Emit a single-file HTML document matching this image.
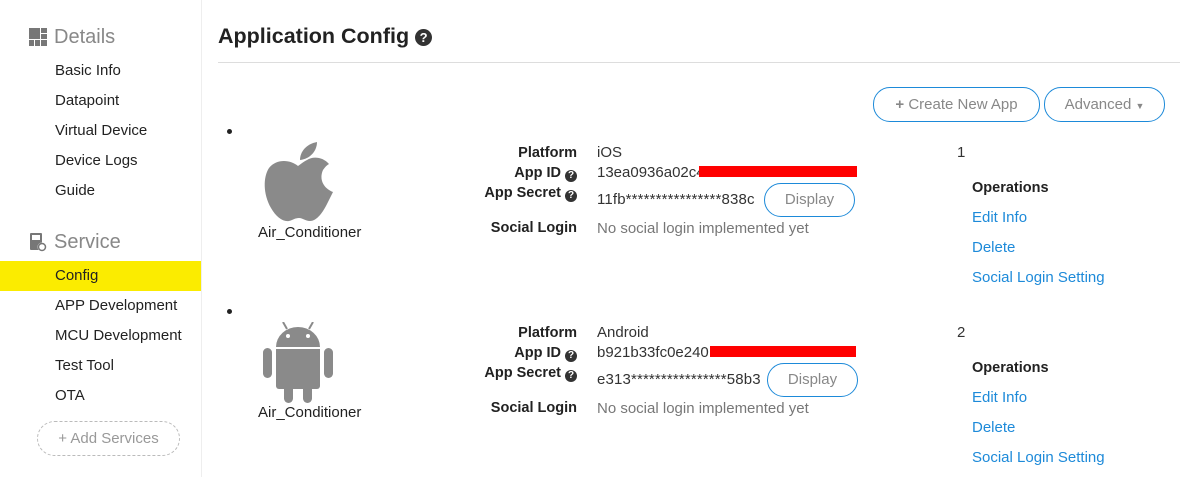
<!DOCTYPE html>
<html><head><meta charset="utf-8"><style>
*{margin:0;padding:0;box-sizing:border-box}
body{width:1184px;height:477px;background:#fff;font-family:"Liberation Sans",sans-serif;color:#333;position:relative;overflow:hidden;font-size:15px}
.a{position:absolute;white-space:nowrap;line-height:20px}
.t{margin-top:1px}
.side{position:absolute;left:0;top:0;width:202px;height:477px;border-right:1px solid #eee}
.si{left:55px;font-size:15px;color:#222}
.hd{font-size:20px;color:#888;left:54px}
.lab{font-weight:bold;text-align:right;width:120px;left:457px;color:#222;font-size:14.5px}
.val{left:597px;color:#333}
.gray{color:#777}
.lnk{left:972px;color:#1d8ad9}
.btn{position:absolute;border:1px solid #1d8ad9;border-radius:17px;color:#888;text-align:center;font-size:15px}
.q{display:inline-block;width:12px;height:12px;border-radius:50%;background:#333;color:#fff;font-size:10px;line-height:12px;text-align:center;vertical-align:-1px;font-weight:bold}
.st{letter-spacing:0.15px}
</style></head><body>
<div class="side"></div>
<div style="position:absolute;left:0;top:261px;width:201px;height:30px;background:#fbec00"></div>
<svg class="a" style="left:29px;top:28px" width="18" height="18" viewBox="0 0 18 18" fill="#777"><rect x="0" y="0" width="11" height="11"/><rect x="12" y="0" width="6" height="5"/><rect x="12" y="6" width="6" height="5"/><rect x="0" y="12" width="5" height="6"/><rect x="6" y="12" width="5" height="6"/><rect x="12" y="12" width="6" height="6"/></svg>
<div class="a hd" style="top:25px;line-height:24px">Details</div>
<div class="a si t" style="top:60px">Basic Info</div>
<div class="a si t" style="top:90px">Datapoint</div>
<div class="a si t" style="top:120px">Virtual Device</div>
<div class="a si t" style="top:150px">Device Logs</div>
<div class="a si t" style="top:180px">Guide</div>
<svg class="a" style="left:29px;top:233px" width="18" height="19" viewBox="0 0 18 19" fill="#777"><rect x="1" y="0" width="12" height="17" rx="1"/><rect x="3" y="2" width="8" height="5" fill="#fff"/><circle cx="13" cy="14" r="4.5" fill="#fff"/><circle cx="13" cy="14" r="3.5" fill="none" stroke="#777" stroke-width="1.5"/></svg>
<div class="a hd" style="top:230px;line-height:24px">Service</div>
<div class="a si t" style="top:265px">Config</div>
<div class="a si t" style="top:295px">APP Development</div>
<div class="a si t" style="top:325px">MCU Development</div>
<div class="a si t" style="top:355px">Test Tool</div>
<div class="a si t" style="top:385px">OTA</div>
<div style="position:absolute;left:37px;top:421px;width:143px;height:35px;border:1px dashed #bbb;border-radius:18px;color:#999;font-size:15px;text-align:center;line-height:33px">+ Add Services</div>

<div class="a" style="left:218px;top:23px;font-size:21.5px;font-weight:bold;color:#222;line-height:26px">Application Config <span class="q" style="width:17px;height:17px;font-size:13px;line-height:17px;vertical-align:1px">?</span></div>
<div style="position:absolute;left:218px;top:62px;width:962px;height:1px;background:#ddd"></div>

<div class="btn" style="left:873px;top:87px;width:167px;height:35px;line-height:33px"><b style="color:#888">+</b> Create New App</div>
<div class="btn" style="left:1044px;top:87px;width:121px;height:35px;line-height:33px">Advanced <span style="font-size:9px">▼</span></div>

<div style="position:absolute;left:227px;top:129px;width:5px;height:5px;border-radius:50%;background:#222"></div>
<svg class="a" style="left:263px;top:142px" width="70" height="80" viewBox="0 0 70 80" fill="#8a8a8a"><path d="M35 24 C28 18 14 16 6 26 C0 35 0 52 8 66 C13 75 20 80 26 79 C30 78 32 76 36 76 C40 76 42 79 47 79 C54 79 60 70 64 62 C66 58 68 54 70 50 C60 46 56 37 60 28 C62 25 64 23 66 22 C60 15 50 14 44 18 C40 20 38 22 35 24 Z"/><path d="M37 18 C37 10 43 2 54 0 C54 9 47 17 37 18 Z"/></svg>
<div class="a t" style="left:258px;top:222px;color:#222">Air_Conditioner</div>

<div class="a lab t" style="top:142px">Platform</div>
<div class="a lab t" style="top:162px">App ID <span class="q">?</span></div>
<div class="a lab t" style="top:182px">App Secret <span class="q">?</span></div>
<div class="a lab t" style="top:217px">Social Login</div>
<div class="a val t" style="top:142px">iOS</div>
<div class="a val t" style="top:162px">13ea0936a02c4</div>
<div style="position:absolute;left:699px;top:166px;width:158px;height:11px;background:#f00"></div>
<div class="a val st t" style="top:189px">11fb****************838c</div>
<div class="btn" style="left:764px;top:183px;width:91px;height:34px;line-height:32px">Display</div>
<div class="a val gray t" style="top:218px">No social login implemented yet</div>
<div class="a t" style="left:957px;top:142px">1</div>
<div class="a t" style="left:972px;top:177px;font-weight:bold;color:#222;font-size:14.5px">Operations</div>
<div class="a lnk t" style="top:207px">Edit Info</div>
<div class="a lnk t" style="top:237px">Delete</div>
<div class="a lnk t" style="top:267px">Social Login Setting</div>

<div style="position:absolute;left:227px;top:309px;width:5px;height:5px;border-radius:50%;background:#222"></div>
<svg class="a" style="left:263px;top:322px" width="70" height="81" viewBox="0 0 70 81" fill="#8a8a8a"><path d="M20 0 L24 7" stroke="#8a8a8a" stroke-width="2"/><path d="M50 0 L46 7" stroke="#8a8a8a" stroke-width="2"/><path d="M13 25 A22 20 0 0 1 57 25 Z"/><circle cx="25" cy="14" r="2" fill="#fff"/><circle cx="45" cy="14" r="2" fill="#fff"/><path d="M13 27 H57 V64 a3 3 0 0 1 -3 3 H16 a3 3 0 0 1 -3 -3 Z"/><rect x="0" y="26" width="9" height="30" rx="4.5"/><rect x="61" y="26" width="9" height="30" rx="4.5"/><rect x="21" y="60" width="9" height="21" rx="4.5"/><rect x="40" y="60" width="9" height="21" rx="4.5"/></svg>
<div class="a t" style="left:258px;top:402px;color:#222">Air_Conditioner</div>

<div class="a lab t" style="top:322px">Platform</div>
<div class="a lab t" style="top:342px">App ID <span class="q">?</span></div>
<div class="a lab t" style="top:362px">App Secret <span class="q">?</span></div>
<div class="a lab t" style="top:397px">Social Login</div>
<div class="a val t" style="top:322px">Android</div>
<div class="a val t" style="top:342px">b921b33fc0e240</div>
<div style="position:absolute;left:710px;top:346px;width:146px;height:11px;background:#f00"></div>
<div class="a val st t" style="top:369px">e313****************58b3</div>
<div class="btn" style="left:767px;top:363px;width:91px;height:34px;line-height:32px">Display</div>
<div class="a val gray t" style="top:398px">No social login implemented yet</div>
<div class="a t" style="left:957px;top:322px">2</div>
<div class="a t" style="left:972px;top:357px;font-weight:bold;color:#222;font-size:14.5px">Operations</div>
<div class="a lnk t" style="top:387px">Edit Info</div>
<div class="a lnk t" style="top:417px">Delete</div>
<div class="a lnk t" style="top:447px">Social Login Setting</div>
</body></html>
